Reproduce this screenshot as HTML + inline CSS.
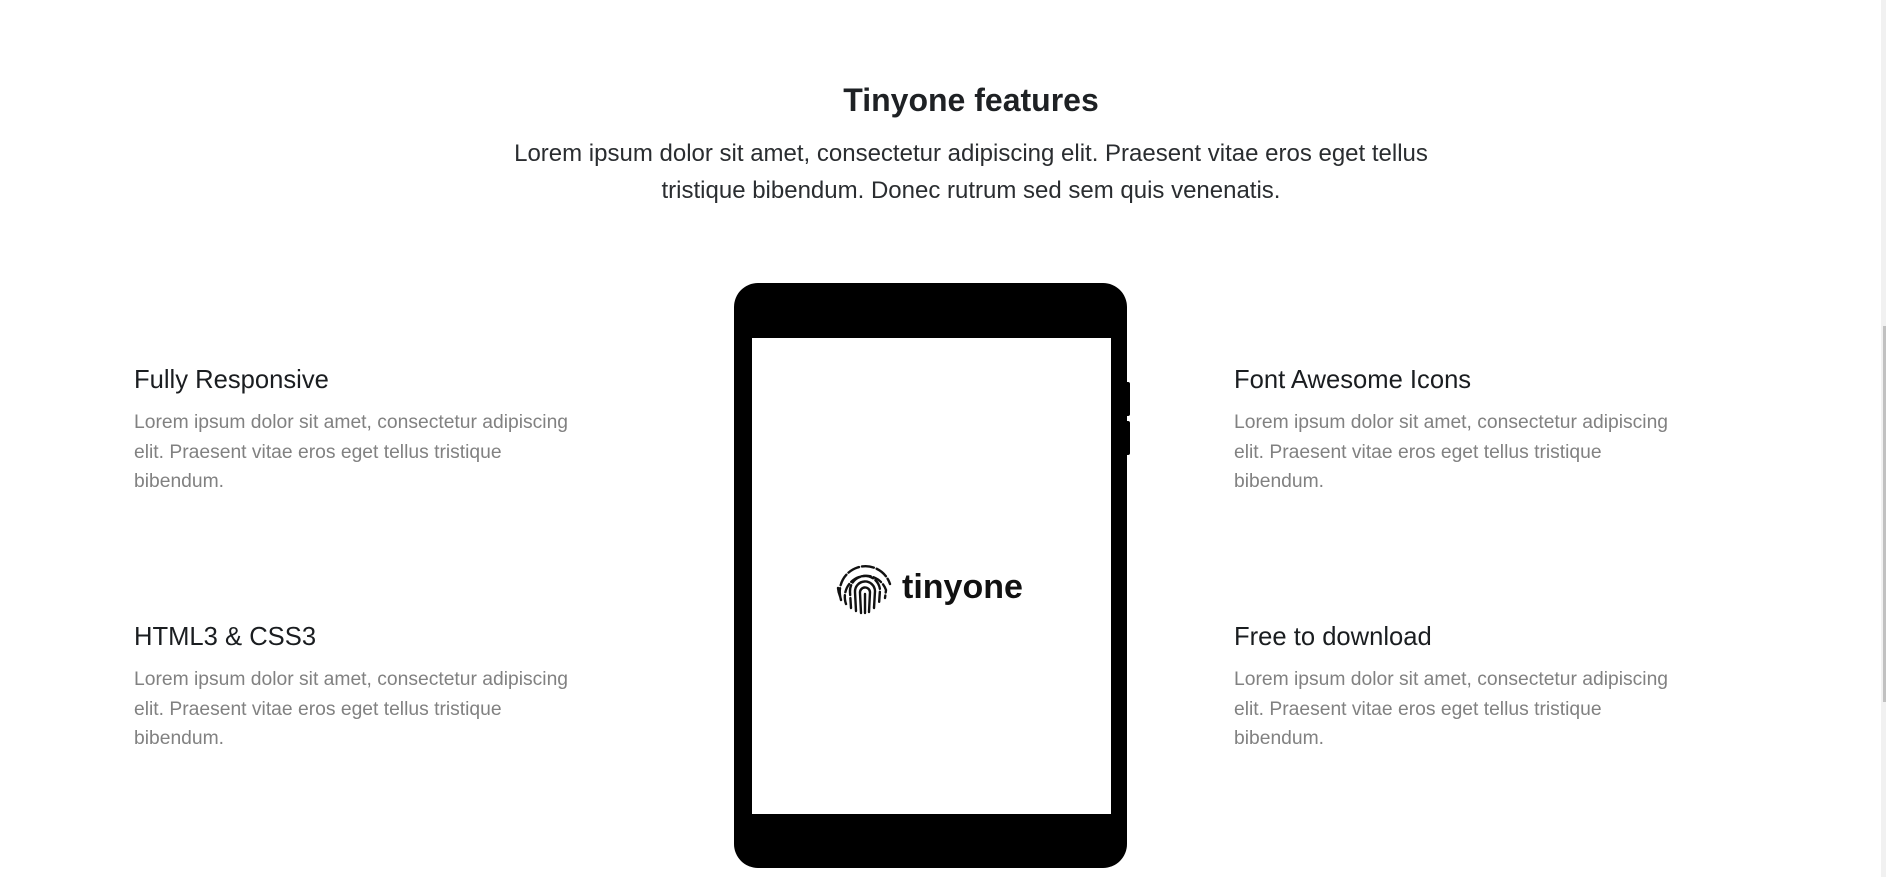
<!DOCTYPE html>
<html><head><meta charset="utf-8"><style>
html,body{margin:0;padding:0;background:#fff;width:1886px;height:877px;overflow:hidden;font-family:"Liberation Sans",sans-serif}
.abs{position:absolute}
h2{position:absolute;left:0;width:1942px;top:82px;margin:0;text-align:center;font-size:32px;font-weight:bold;color:#1e2124}
.lead{position:absolute;left:421px;width:1100px;top:135px;text-align:center;font-size:24px;line-height:37px;color:#2a2d30}
.f{position:absolute;width:520px}
.f h3{margin:0;font-size:25.6px;font-weight:normal;color:#1a1d20;line-height:32px}
.f p{margin:12px 0 0;font-size:19.3px;line-height:29.5px;color:#818181}
</style></head><body>
<h2>Tinyone features</h2>
<div class="lead">Lorem ipsum dolor sit amet, consectetur adipiscing elit. Praesent vitae eros eget tellus<br>tristique bibendum. Donec rutrum sed sem quis venenatis.</div>

<div class="f" style="left:134px;top:364px"><h3>Fully Responsive</h3><p>Lorem ipsum dolor sit amet, consectetur adipiscing<br>elit. Praesent vitae eros eget tellus tristique<br>bibendum.</p></div>
<div class="f" style="left:134px;top:621px"><h3>HTML3 &amp; CSS3</h3><p>Lorem ipsum dolor sit amet, consectetur adipiscing<br>elit. Praesent vitae eros eget tellus tristique<br>bibendum.</p></div>
<div class="f" style="left:1234px;top:364px"><h3>Font Awesome Icons</h3><p>Lorem ipsum dolor sit amet, consectetur adipiscing<br>elit. Praesent vitae eros eget tellus tristique<br>bibendum.</p></div>
<div class="f" style="left:1234px;top:621px"><h3>Free to download</h3><p>Lorem ipsum dolor sit amet, consectetur adipiscing<br>elit. Praesent vitae eros eget tellus tristique<br>bibendum.</p></div>

<div class="abs" style="left:734px;top:283px;width:393px;height:585px;background:#000;border-radius:24px"></div>
<div class="abs" style="left:1126px;top:382px;width:4px;height:34px;background:#000;border-radius:0 2px 2px 0"></div>
<div class="abs" style="left:1126px;top:421px;width:4px;height:34px;background:#000;border-radius:0 2px 2px 0"></div>
<div class="abs" style="left:752px;top:338px;width:359px;height:476px;background:#fff"></div>

<svg class="abs" style="left:836px;top:559px" width="58" height="58" viewBox="-29 -29 58 58" fill="none" stroke="#111" stroke-width="2.4" stroke-linecap="round">
<path d="M-24 12 A25 25 0 0 1 25 -4" stroke-dasharray="12 3"/>
<path d="M-19 16 A20 20 0 0 1 21 2 L20 10" stroke-dasharray="9 3"/>
<path d="M-14 20 L-15 4 A15 15 0 0 1 15 2 L14 16" stroke-dasharray="10 3"/>
<path d="M-9 23 L-10 4 A10 10 0 0 1 10 3 L9 20"/>
<path d="M-4 25 L-5 5 A5 5 0 0 1 5 4 L4 24"/>
<path d="M0 6 L0 25"/>
<path d="M-27 0 A27 27 0 0 0 -25 8"/>
</svg>
<div class="abs" style="left:902px;top:568px;font-size:34px;font-weight:bold;color:#111;letter-spacing:0px">tinyone</div>

<div class="abs" style="left:1881px;top:0;width:5px;height:877px;background:#f1f1f1"></div>
<div class="abs" style="left:1883px;top:326px;width:3px;height:376px;background:#c1c1c1"></div>
</body></html>
